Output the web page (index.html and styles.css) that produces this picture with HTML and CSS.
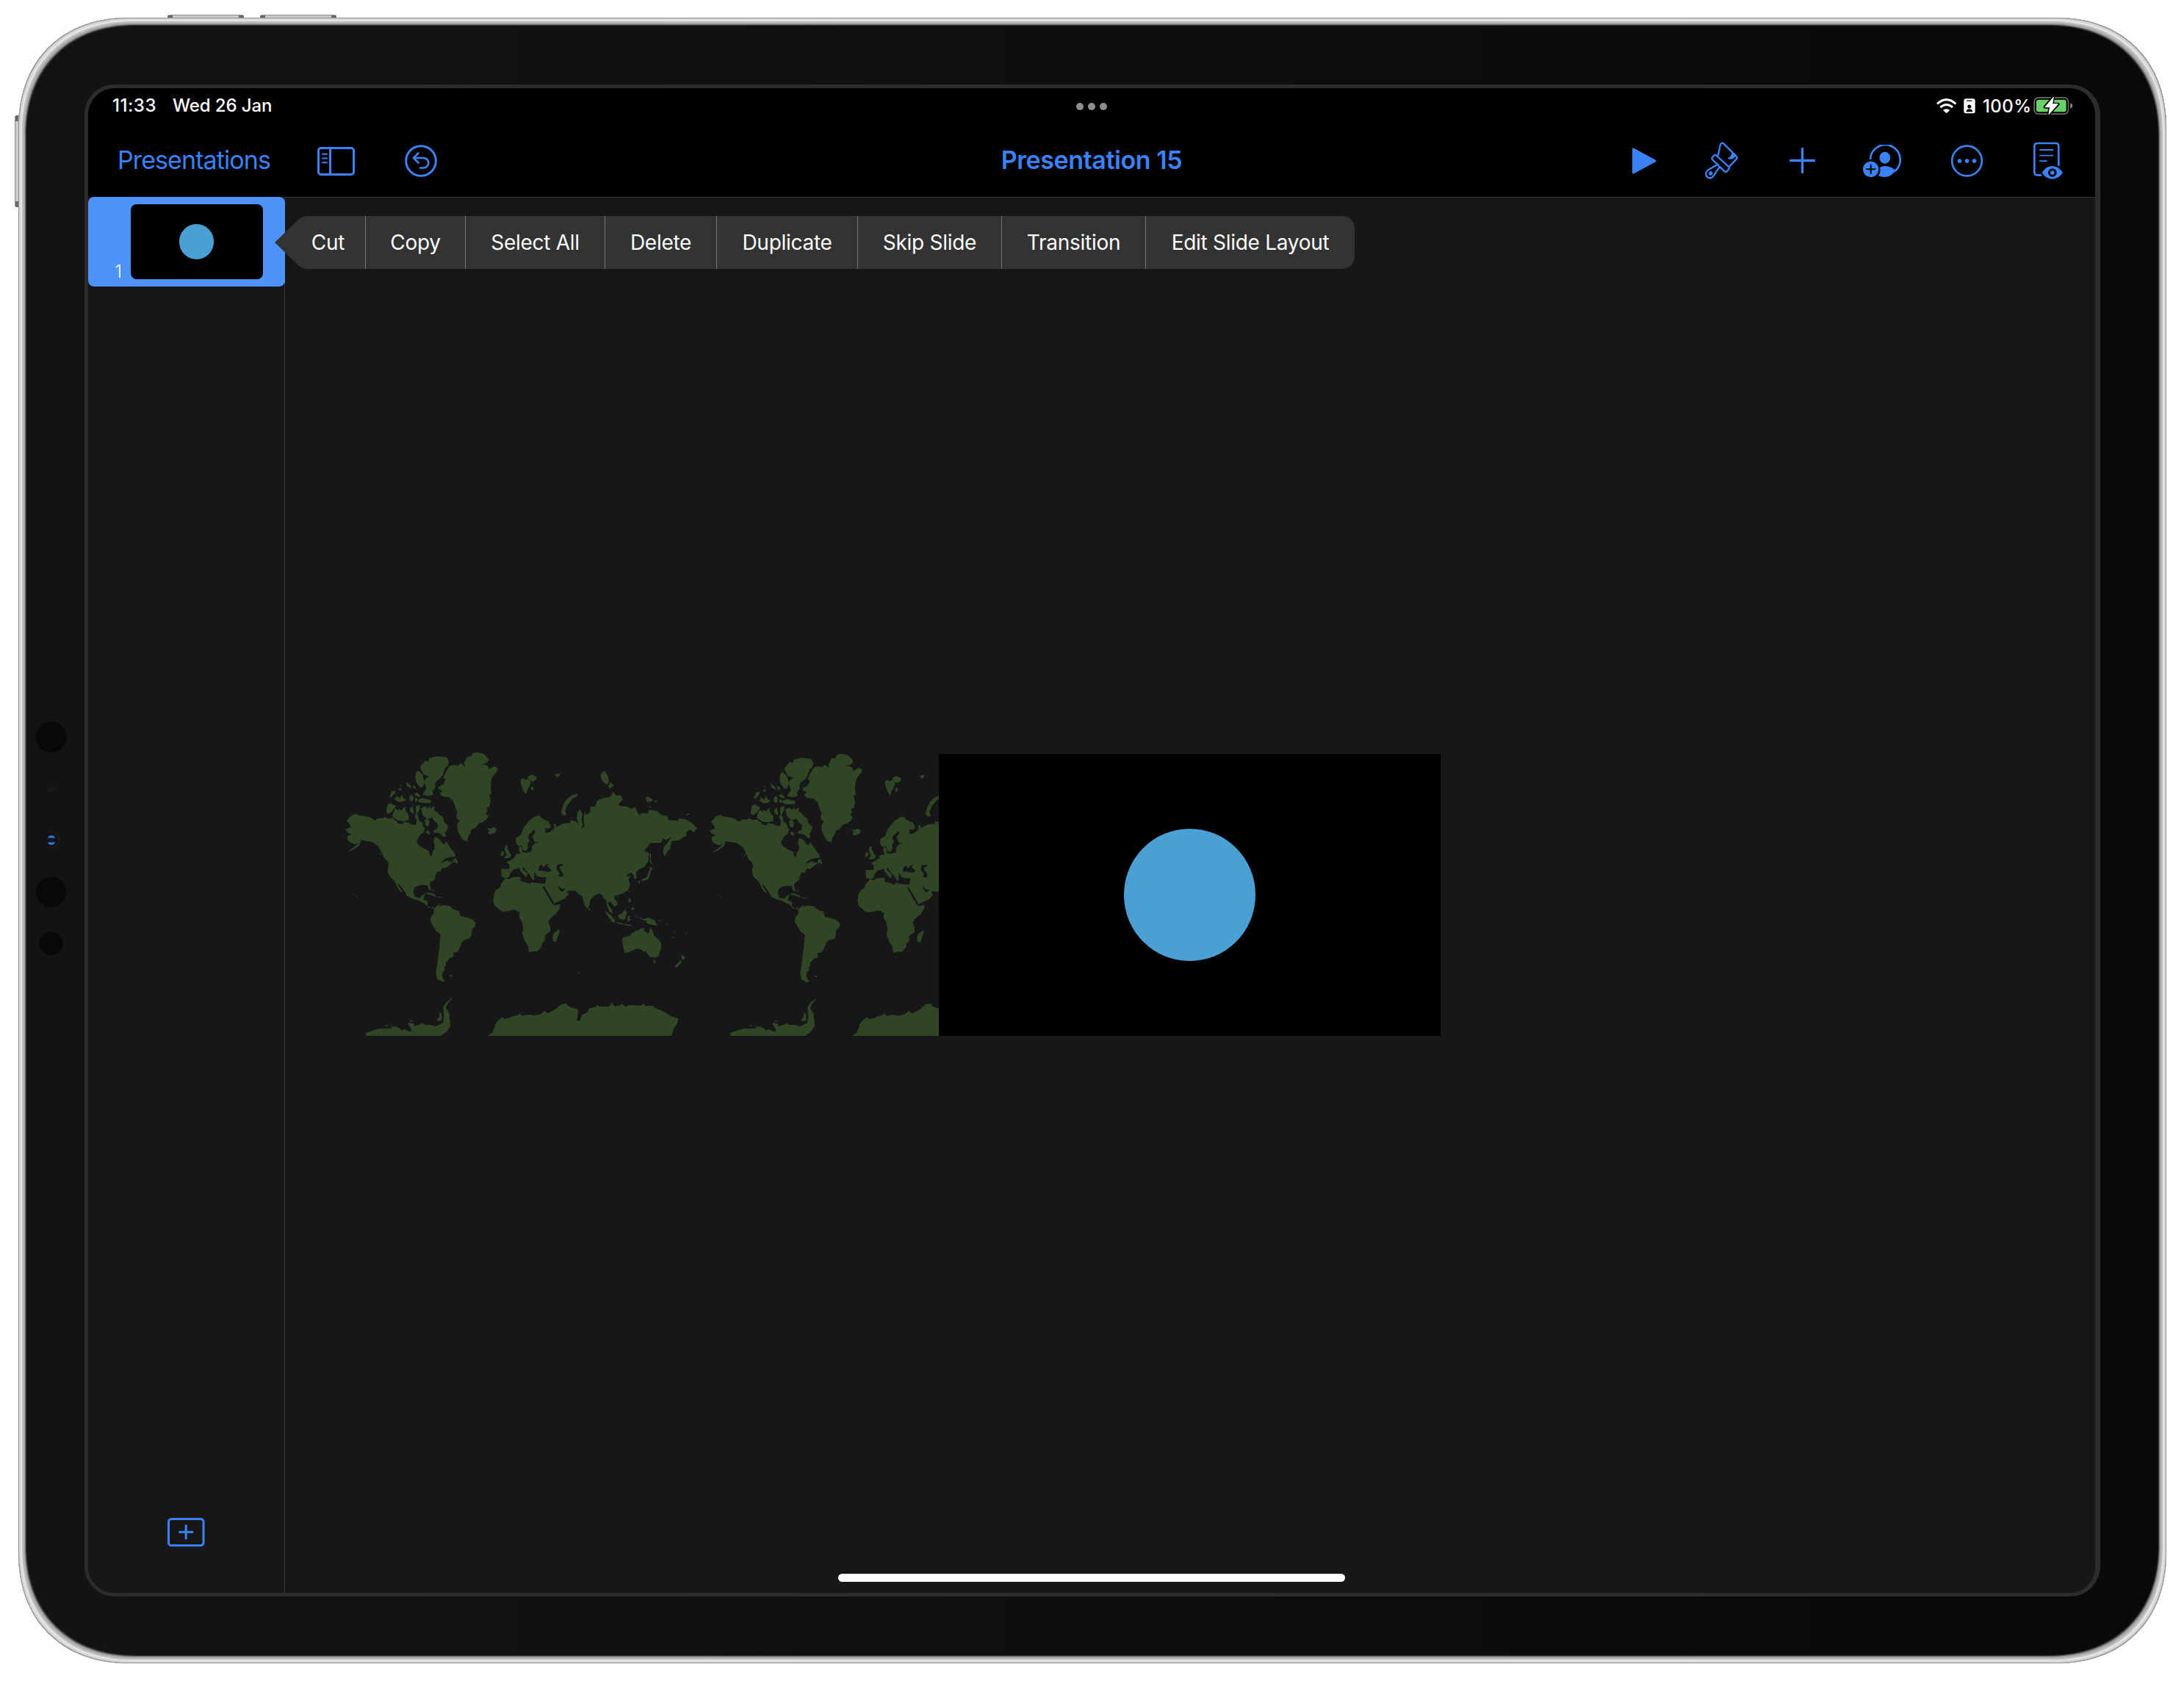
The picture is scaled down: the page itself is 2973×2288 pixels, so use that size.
FILE: index.html
```html
<!DOCTYPE html>
<html lang="en">
<head>
<meta charset="utf-8">
<title>Presentation 15</title>
<link rel="stylesheet" href="styles.css">
</head>
<body>
<div class="stage">
  <div class="device">
    <i class="key key-top key-up"></i>
    <i class="key key-top key-down"></i>
    <i class="key key-side"></i>
    <svg class="sensors" width="60" height="340" viewBox="40 970 60 340">
      <circle cx="69.5" cy="1003" r="21" fill="#080808"/>
      <circle cx="69.5" cy="1073" r="3.5" fill="none" stroke="#222" stroke-width="2" stroke-dasharray="1.5 1.5"/>
      <circle cx="69.5" cy="1073" r="1" fill="#222"/>
      <circle cx="70.5" cy="1143" r="11" fill="#1a1b1c"/>
      <circle cx="69" cy="1143" r="10" fill="#101112"/>
      <circle cx="69.8" cy="1143.3" r="6.5" fill="#0d1430"/>
      <path d="M65 1140.500Q66 1137 70 1137T75 1140.500Z M65 1146.500Q66 1150 70 1150T75 1146.500Z" fill="#3f72b8"/>
      <circle cx="69.500" cy="1214" r="20.500" fill="#080808"/>
      <circle cx="69.500" cy="1284" r="16" fill="#080808"/>
    </svg>

    <div class="screen">
      <header class="status">
        <div class="status-left"><span class="time">11:33</span><span class="date">Wed 26 Jan</span></div>
        <div class="dots"><i></i><i></i><i></i></div>
        <div class="status-right">
          <svg class="wifi" width="29" height="22" viewBox="976 26 87 66" fill="none" stroke="#fff">
            <path d="M982 51Q1020 17 1058 51" stroke-width="9"/>
            <path d="M995 65Q1020 44 1045 65" stroke-width="9"/>
            <path d="M1020 90L1006 77Q1020 66 1034 77Z" fill="#fff" stroke="none"/>
          </svg>
          <svg class="badge" width="16" height="21" viewBox="1091 29 48 63">
            <rect x="1092" y="30" width="46" height="60" rx="9" fill="#fff"/>
            <path d="M1105 38.500H1124" stroke="#000" stroke-width="4" stroke-linecap="round"/>
            <circle cx="1114.500" cy="62" r="7.500" fill="#000"/>
            <path d="M1101 84Q1103 72 1114.500 72T1128 84Z" fill="#000"/>
          </svg>
          <span class="percent">100%</span>
          <svg class="battery" width="54" height="26" viewBox="1376 21 162 78">
            <rect x="1379.500" y="26.500" width="139" height="67" rx="17" fill="none" stroke="#6b6b6b" stroke-width="5"/>
            <path d="M1527 49Q1536 53 1536 60T1527 72Z" fill="#8a8a8a"/>
            <rect x="1388" y="35" width="122" height="50" rx="9" fill="#67d067"/>
            <path d="M1458 24L1423 65H1444L1438 96L1477 53H1453Z" fill="#fff" stroke="#000" stroke-width="12" stroke-linejoin="round"/>
            <path d="M1458 25L1424 65H1444L1439 95L1476 53H1453Z" fill="#fff" stroke="#fff" stroke-width="3" stroke-linejoin="round"/>
          </svg>
        </div>
      </header>

      <nav class="toolbar">
        <div class="tools-left">
          <span class="back">Presentations</span>
          <svg class="panel-icon" width="52" height="40" viewBox="431 198 52 40">
            <rect x="433.500" y="200.500" width="48" height="36" rx="3.500" fill="none" stroke="currentColor" stroke-width="3"/>
            <path d="M449.500 200V237" stroke="currentColor" stroke-width="3"/>
            <path d="M439 208.700H445 M439 214.500H445 M439 220.300H445" stroke="currentColor" stroke-width="2" stroke-linecap="round"/>
          </svg>
          <svg width="44" height="44" viewBox="551.500 196.500 44 44" fill="none" stroke="currentColor" stroke-width="3" stroke-linecap="round" stroke-linejoin="round">
            <circle cx="573.500" cy="218.500" r="20.300"/>
            <path d="M570 208L563.500 214.500L570 221 M564 214.500H577A6.700 6.700 0 0 1 577 228H572.500" stroke-width="2.600"/>
          </svg>
        </div>
        <h1 class="title">Presentation 15</h1>
        <div class="tools-right">
          <svg class="play" width="36" height="40" viewBox="2220 199 36 40"><path d="M2223.500 203V235L2253 219Z" fill="currentColor" stroke="currentColor" stroke-width="3" stroke-linejoin="round"/></svg>
          <svg class="brush" width="47" height="53" viewBox="30 205 141 159" fill="none" stroke="currentColor" stroke-width="7" stroke-linejoin="round" stroke-linecap="round">
            <path d="M85 265C91 252 92 228 97 217Q102 209 109 216L161 267Q166 273 161 279L133 308"/>
            <path d="M78 263L131 311Q134 316 130 320L122 329Q118 333 113 329L64 282Q59 277 63 271L70 264Q74 260 78 263Z"/>
            <path d="M83 297L80 303L48 321C35 329 33 343 42 352C53 360 63 356 69 345L91 312L99 315"/>
            <circle cx="56" cy="337" r="8" fill="currentColor" stroke="none"/>
            <path d="M142 247C143 261 138 270 124 276Q136 282 148 276L160 266Z" fill="currentColor" stroke="none"/>
          </svg>
          <svg class="plus" width="37" height="37" viewBox="2435 200 37 37" stroke="currentColor" stroke-width="3.300" stroke-linecap="round"><path d="M2453.500 202.500V234.500M2437.500 218.500H2469.500"/></svg>
          <svg class="collab" width="53" height="44" viewBox="675 216 159 132">
            <path d="M708 276A61 61 0 1 1 807 325" fill="none" stroke="currentColor" stroke-width="8"/>
            <ellipse cx="767.500" cy="269" rx="22" ry="24" fill="currentColor"/>
            <path d="M747 309Q757 303 768 303Q796 304 811 322Q794 347 767 348Q753 348 741 343Q752 329 747 309Z" fill="currentColor"/>
            <circle cx="710" cy="316" r="32" fill="currentColor"/>
            <path d="M710 299V333M693 316H727" stroke="#000" stroke-width="6" stroke-linecap="round"/>
          </svg>
          <svg class="more" width="45" height="44" viewBox="1035 217 135 132" fill="currentColor">
            <circle cx="1102.500" cy="283" r="61" fill="none" stroke="currentColor" stroke-width="8"/>
            <circle cx="1072.500" cy="283" r="8.500"/><circle cx="1102.500" cy="283" r="8.500"/><circle cx="1132.500" cy="283" r="8.500"/>
          </svg>
          <svg class="doc" width="42" height="51" viewBox="1371 208 126 153" fill="none" stroke="currentColor" stroke-width="8" stroke-linecap="butt">
            <path d="M1477 306V226Q1477 214 1465 214H1390Q1378 214 1378 226V331Q1378 344 1390 344H1407"/>
            <path d="M1401 241H1453M1401 264H1453M1401 286.500H1428" stroke-width="5.500" stroke-linecap="round"/>
            <path d="M1409 334Q1426 307 1451 307T1494 334Q1477 360 1451 360T1409 334Z" fill="currentColor" stroke="none"/>
            <circle cx="1451.500" cy="334" r="13" stroke="#000" stroke-width="9"/>
          </svg>
        </div>
      </nav>

      <main class="workspace">
        <aside class="sidebar">
          <div class="slide-item">
            <span class="slide-number">1</span>
            <div class="thumb"><i class="ball"></i></div>
          </div>
          <svg class="add-slide" width="52" height="40" viewBox="227 2064 52 40" fill="none" stroke="currentColor" stroke-width="3" stroke-linecap="round">
            <rect x="229.500" y="2066.500" width="47.500" height="36" rx="4"/>
            <path d="M253.200 2075.500V2093M244.500 2084.300H262"/>
          </svg>
        </aside>

        <section class="canvas">
          <svg class="map" width="818" height="400" viewBox="0 0 2454 1200">
            <defs>
              <g id="world">
                <g fill="#2f4524">
                <path d="M35 322L55 300L73 292L85 299L105 302L130 307L152 321L162 312L185 311L190 306L205 313L225 310L230 318L240 322L244 332L265 335L268 325L290 330L300 336L318 338L322 318L314 305L318 288L328 300L332 320L345 330L348 345L356 350L350 368L335 380L325 398L322 408L328 420L350 434L370 443L375 460L381 468L386 452L386 445L393 440L396 425L390 405L396 388L405 390L418 400L425 412L436 418L441 403L455 425L465 440L477 455L480 468L450 472L432 480L420 495L445 484L455 485L452 492L462 487L470 492L472 478L482 474L490 492L486 497L478 490L460 498L452 506L438 515L430 512L422 520L420 528L405 530L398 545L395 560L378 573L374 580L380 600L376 607L370 600L366 585L345 583L325 588L313 595L308 612L315 632L335 636L345 624L356 620L350 638L350 645L365 648L366 668L378 677L390 672L390 682L382 676L372 678L355 660L340 654L325 645L305 640L280 628L278 618L265 600L245 575L248 588L265 614L255 610L243 593L232 570L215 552L205 538L203 512L207 510L205 490L190 475L178 450L165 425L140 408L105 402L95 400L88 422L65 438L38 449L65 430L85 412L70 418L55 412L45 405L38 395L40 382L55 378L38 368L30 357L52 348L48 335Z"/>
                <path d="M392 680L405 668L418 662L416 673L425 665L455 668L468 680L480 686L495 690L500 710L530 718L548 724L563 738L560 752L547 765L545 790L538 802L520 806L508 815L500 835L488 857L470 860L473 870L468 880L455 882L450 892L440 900L442 910L434 918L438 930L428 938L425 955L430 968L440 976L425 979L405 968L400 940L405 910L410 870L415 830L419 785L400 770L388 750L377 730L382 710L392 700Z"/>
                <path d="M408 185L432 170L440 152L430 145L440 125L455 98L475 92L490 97L500 86L520 100L515 85L528 60L545 58L550 45L570 42L595 47L618 72L608 85L580 94L600 92L613 98L615 112L640 98L653 108L648 122L630 143L625 165L624 195L628 208L618 215L624 240L618 265L608 268L612 285L602 290L615 302L605 318L590 328L575 332L562 350L545 358L540 375L532 385L528 405L510 400L498 380L488 358L487 335L497 320L485 312L483 295L488 288L480 268L470 240L455 226L425 222L415 208L428 201L410 190Z"/>
                <path d="M370 80L373 66L385 62L410 58L445 63L453 80L448 98L438 106L428 135L418 148L400 162L396 175L400 182L386 200L390 215L370 220L345 215L350 207L362 190L353 165L358 150L372 140L350 133L336 105L338 96L358 76Z"/>
                <path d="M318 125L328 116L345 132L352 155L355 165L345 185L335 185L320 165L316 145Z"/>
                <path d="M340 270L355 262L368 272L375 260L378 272L395 262L393 278L405 285L412 295L430 308L432 325L450 343L445 360L438 370L443 385L432 388L415 372L392 370L390 360L405 355L408 335L395 325L385 308L365 315L345 297Z"/>
                <path d="M225 290L235 270L245 280L250 272L258 280L275 262L276 280L290 300L290 318L270 323L245 320L222 305Z"/>
                <path d="M197 285L203 255L215 250L237 262L222 283L205 295Z"/>
                <path d="M211 222L220 200L235 198L232 210L215 228Z M232 235L240 218L252 230L262 213L266 228L278 234L270 243L250 245Z M279 163L298 178L300 190L282 180Z M291 225L300 213L309 225L305 242L293 240Z M311 215L322 205L338 220L330 225Z M326 235L345 228L380 236L378 248L345 249L330 245Z M294 270L305 262L310 285L308 294L296 285Z M318 262L335 256L335 272L322 295L318 280Z M306 175L317 180L318 192L308 188Z M248 178L256 172L258 179Z M247 190L258 187L260 196L252 199Z M313 232L322 228L326 238L318 245Z M354 318L365 312L375 325L370 345L358 342Z M358 365L368 360L378 378L365 375Z"/>
                <path d="M608 350L620 354L638 347L648 358L642 370L622 377L612 371L618 363Z"/>
                <path d="M684 422L692 420L692 435L698 445L708 462L704 472L685 475L678 472L690 460L684 450L680 435Z M664 462L668 448L678 445L677 460L670 467Z"/>
                <path d="M746 155L755 148L768 155L775 147L788 162L782 180L773 195L768 213L758 200L752 185L747 170Z M775 142L790 133L810 140L812 150L798 162L782 155Z M788 185L795 180L800 192L790 199Z M886 130L896 131L908 127L905 137L896 145Z"/>
                <path d="M912 288L918 262L932 236L952 219L978 210L980 219L958 232L938 256L928 280L933 298L920 300Z M1072 138L1080 122L1090 118L1103 140L1107 165L1098 174L1080 160Z M1112 163L1128 178L1108 190L1104 180Z M1256 228L1265 222L1285 233L1282 243L1262 245Z M1290 237L1308 242L1297 246Z M1268 262L1280 265L1275 269Z M1422 296L1432 290L1436 297L1425 299Z"/>
                <path d="M668 518L700 518L700 500L688 490L704 484L722 470L725 458L745 455L738 438L742 425L750 428L754 450L770 452L790 447L792 428L805 412L820 408L803 407L793 385L806 368L800 357L792 368L779 378L777 392L783 403L775 415L777 432L766 445L756 440L750 422L736 425L727 410L726 393L747 378L757 352L780 322L805 303L825 300L830 310L860 325L870 345L862 353L845 352L848 372L868 366L885 350L880 335L890 334L892 347L920 332L950 330L950 318L972 325L983 335L975 310L980 285L990 275L998 295L995 320L1000 338L993 354L1006 345L1003 310L1008 280L1012 297L1030 288L1030 265L1052 262L1058 240L1085 228L1110 225L1125 203L1135 218L1155 218L1164 235L1145 255L1155 262L1182 263L1195 272L1215 266L1222 285L1232 300L1240 290L1265 292L1272 276L1305 283L1320 298L1345 302L1350 318L1388 322L1392 312L1420 315L1445 330L1467 352L1455 368L1435 358L1422 370L1424 385L1410 388L1400 397L1388 402L1362 405L1357 435L1345 448L1334 468L1328 450L1330 430L1345 412L1362 387L1340 400L1328 394L1320 412L1278 412L1250 445L1270 452L1268 485L1252 510L1235 516L1218 530L1220 558L1210 558L1208 545L1198 533L1178 543L1185 550L1197 546L1187 560L1193 585L1185 605L1165 617L1145 624L1130 628L1128 640L1142 655L1140 665L1130 672L1112 652L1102 655L1108 670L1120 685L1121 702L1107 690L1098 665L1096 645L1085 640L1083 630L1072 618L1050 625L1030 645L1027 665L1018 680L1010 670L1003 650L997 628L988 625L970 607L935 608L925 600L910 597L898 584L903 600L915 612L930 600L942 622L925 640L880 660L860 625L836 590L845 578L850 552L830 553L812 548L810 538L820 530L815 542L800 532L806 545L800 545L803 558L796 565L782 540L770 528L755 507L755 520L778 540L772 540L772 552L765 550L748 530L740 513L715 522L705 535L698 552L685 556L668 550Z"/>
                <path d="M680 562L685 556L700 560L715 552L745 550L746 568L765 572L785 580L788 572L820 577L845 578L838 590L858 630L880 666L908 663L905 680L890 702L870 717L859 733L867 755L867 773L845 790L845 812L834 820L832 835L815 855L795 855L780 859L777 835L762 810L752 780L757 765L752 735L740 715L742 692L735 695L730 687L715 685L695 691L670 692L640 668L634 650L637 622L645 605L665 590L665 580Z"/>
                <path d="M903 761L905 775L898 795L890 817L878 812L877 795L882 780L895 772Z M1022 673L1031 683L1024 688Z"/>
                <path d="M1160 808L1165 798L1190 793L1200 782L1215 770L1230 768L1240 758L1252 762L1250 770L1268 783L1276 755L1285 770L1290 788L1308 805L1320 820L1320 845L1308 875L1295 880L1275 878L1265 865L1255 852L1250 858L1240 848L1225 844L1205 850L1190 858L1172 862L1165 835Z M1288 890L1298 892L1296 903L1290 902Z M1403 863L1410 875L1420 877L1412 890L1404 885Z M1400 890L1405 895L1385 922L1374 918Z"/>
                <path d="M1087 687L1100 695L1118 710L1132 728L1130 738L1120 735L1105 715Z M1130 735L1160 739L1168 745L1150 744Z M1142 708L1158 700L1173 685L1180 697L1172 725L1150 722Z M1183 712L1200 708L1188 716L1200 730L1190 727L1188 738L1182 728Z M1232 712L1245 722L1268 717L1295 728L1300 742L1308 750L1285 747L1262 740L1258 730L1240 725Z M1185 640L1195 638L1196 652L1188 655Z M1195 680L1208 672L1210 684L1202 685Z M1170 742L1200 748L1198 752L1172 747Z M1215 702L1220 715L1216 718Z M1188 605L1192 607L1190 617Z M1140 628L1148 628L1145 635Z M1225 570L1235 565L1232 578Z M1238 560L1262 552L1268 530L1275 520L1270 508L1288 515L1278 525L1275 540L1268 560L1245 568Z M1272 455L1280 455L1278 480L1284 498L1276 495Z M1310 725L1320 730L1312 732Z M1340 742L1352 748L1345 748Z M1373 770L1379 772L1375 777Z M1366 794L1376 800L1370 801Z M1418 784L1426 775L1422 785Z"/>
                <path d="M355 618L370 614L395 622L402 633L385 626Z M400 630L428 634L415 637Z M458 953L470 951L468 958L458 958Z M981 936L986 938L984 944Z M60 619L66 622L62 623Z M72 626L80 631L76 632Z M15 376L22 378L20 382Z M170 450L178 458L174 462Z M384 598L392 606L388 609Z"/>
                <path d="M115 1200L114 1188L145 1177L165 1170L215 1170L225 1162L245 1163L262 1178L270 1172L298 1184L300 1172L288 1155L288 1146L310 1150L310 1160L330 1155L345 1147L355 1155L380 1155L398 1162L430 1145L433 1120L430 1080L445 1060L473 1043L450 1065L440 1085L455 1110L459 1160L445 1182L420 1200Z M403 1135L415 1120L415 1103L424 1110L425 1135L412 1140Z M292 1135L315 1139L298 1142Z M192 1156L205 1156L200 1163Z M212 1159L224 1160L218 1163Z"/>
                <path d="M610 1200L630 1187L642 1160L640 1155L662 1130L673 1124L680 1130L705 1126L712 1120L735 1115L742 1108L752 1117L780 1113L800 1117L825 1112L843 1098L858 1108L890 1090L912 1070L932 1067L940 1078L960 1086L978 1090L982 1105L975 1138L988 1137L998 1113L1018 1105L1025 1088L1055 1080L1058 1072L1064 1080L1108 1080L1118 1064L1130 1079L1150 1076L1160 1069L1172 1080L1190 1074L1238 1076L1248 1067L1255 1077L1285 1077L1298 1088L1320 1095L1338 1105L1360 1120L1390 1128L1388 1145L1370 1172L1362 1200Z"/>
                </g>
                <g fill="#171719">
                  <path d="M818 525L822 508L832 500L840 512L850 500L860 497L855 508L868 518L870 527L855 530L838 526Z M893 505L905 498L918 498L917 505L905 510L908 520L918 535L920 549L905 550L900 545L906 537L893 518Z"/>
                </g>
                <path d="M839 590L858 622L879 658" fill="none" stroke="#171719" stroke-width="7"/>
              </g>
            </defs>
            <g><use href="#world"/></g>
            <g><use href="#world" transform="translate(1488 6.500) scale(1 .9945)"/></g>
          </svg>
          <div class="slide"><i class="ball"></i></div>

          <div class="menu">
            <span>Cut</span><span>Copy</span><span>Select All</span><span>Delete</span><span>Duplicate</span><span>Skip Slide</span><span>Transition</span><span>Edit Slide Layout</span>
          </div>
          <i class="home-bar"></i>
        </section>
      </main>
    </div>
  </div>
</div>
</body>
</html>
```
FILE: styles.css
```css
* { box-sizing: border-box; }

body {
  margin: 0;
  background: #fff;
  font-family: Inter, "Liberation Sans", sans-serif;
}

svg { display: block; flex: none; }

.stage {
  width: 2973px;
  height: 2288px;
  padding: 24px 24px 24px 25px;
  overflow: hidden;
}

/* Tablet body */
.device {
  position: relative;
  width: 2924px;
  height: 2240px;
  padding: 91px 90px;
  border-radius: 152px;
  corner-shape: superellipse(1.15);
  background: linear-gradient(90deg, #131313, #090909);
  box-shadow:
    inset 0 0 0 1px #929695,
    inset 0 0 0 3px #d3d6d5,
    inset 0 0 0 5px #e3e6e5,
    inset 0 0 0 7px #bdc0bf,
    inset 0 0 0 9px #a3a6a5,
    inset 0 0 0 10px #686a69,
    inset 0 0 0 11px #363737;
}

.key {
  position: absolute;
  background: #c9cccb;
}
.key-top {
  top: -4px;
  width: 104px;
  height: 4px;
  border-top: 1px solid #8a8d8c;
  border-left: 7px solid #666968;
  border-right: 7px solid #666968;
  border-radius: 3px 3px 0 0;
}
.key-up { left: 203px; }
.key-down { left: 329px; }
.key-side {
  left: -5px;
  top: 133px;
  width: 5px;
  height: 125px;
  border-left: 1px solid #8a8d8c;
  border-top: 8px solid #666968;
  border-bottom: 8px solid #666968;
  border-radius: 3px 0 0 3px;
}
.sensors {
  position: absolute;
  left: 15px;
  top: 946px;
}

.screen {
  display: flex;
  flex-direction: column;
  width: 2744px;
  height: 2058px;
  border: 5px solid #2c2c2c;
  border-right-width: 7px;
  border-radius: 41px;
  background: #000;
  overflow: hidden;
}

/* Status bar */
.status {
  display: grid;
  grid-template-columns: 1fr auto 1fr;
  align-items: center;
  height: 50px;
  color: #fff;
  font-size: 24px;
  font-weight: 500;
}
.status-left {
  display: flex;
  gap: 22px;
  padding: 0 0 3px 33px;
  white-space: nowrap;
}
.time { width: 60px; letter-spacing: .55px; }
.date { letter-spacing: -.1px; }
.dots { display: flex; gap: 6px; }
.dots i {
  width: 10px;
  height: 10px;
  border-radius: 50%;
  background: #8e8e8e;
}
.status-right {
  display: flex;
  justify-content: flex-end;
  align-items: center;
  padding: 0 30px 2px 0;
}
.badge { margin-left: 9px; }
.percent {
  width: 65px;
  margin: 0 4px 0 10px;
  letter-spacing: .4px;
  font-weight: 450;
}

/* Toolbar */
.toolbar {
  display: grid;
  grid-template-columns: 1fr auto 1fr;
  align-items: center;
  height: 98px;
  padding-bottom: 1px;
  color: #3b82f7;
  font-size: 34px;
}
.tools-left {
  display: flex;
  align-items: center;
  padding-left: 40px;
}
.back {
  width: 207px;
  margin: 0 64px 2px 0;
  letter-spacing: -.9px;
  white-space: nowrap;
}
.panel-icon { margin-right: 68px; }
.title {
  margin: 0 0 2px;
  font-size: 34px;
  font-weight: 600;
  letter-spacing: -.42px;
}
.tools-right {
  display: flex;
  justify-content: flex-end;
  align-items: center;
  padding-right: 43px;
}
.play { margin-right: 64px; }
.brush { margin-right: 68px; }
.plus { margin-right: 63px; }
.collab { margin-right: 67px; }
.more { margin-right: 67px; }

/* Workspace */
.workspace {
  display: flex;
  flex: 1;
  background: #171719;
}
.sidebar {
  display: flex;
  flex-direction: column;
  align-items: center;
  justify-content: space-between;
  width: 268px;
  padding-bottom: 63px;
  border-right: 1px solid #3a3a3c;
  color: #3b82f7;
}
.add-slide { margin-right: 1px; }
.slide-item {
  display: flex;
  align-items: flex-end;
  width: 268px;
  height: 122px;
  padding: 10px 10px 10px 37px;
  border-radius: 8px;
  background: #4f92f8;
  position: relative;
}
.slide-number {
  width: 21px;
  margin-bottom: -3px;
  color: #fff;
  font-size: 24px;
  font-weight: 300;
  line-height: 26px;
}
.thumb,
.slide {
  display: flex;
  align-items: center;
  justify-content: center;
  background: #000;
}
.thumb {
  width: 180px;
  height: 102px;
  border-radius: 8px;
}
.ball {
  width: 26.3%;
  aspect-ratio: 1;
  border-radius: 50%;
  background: #4a9fd4;
}

.canvas {
  position: relative;
  flex: 1;
  border-top: 1px solid #38383a;
}
.map {
  position: absolute;
  left: 72px;
  top: 741px;
}
.slide {
  position: absolute;
  left: 890px;
  top: 757px;
  width: 683px;
  height: 384px;
}

/* Edit menu, with its pointer aimed at the selected slide */
.menu {
  position: absolute;
  left: -14px;
  top: 25px;
  display: grid;
  grid-template-columns: 123px 136px 190px 152px 192px 196px 196px 285px;
  width: 1470px;
  height: 72px;
  background: #333334;
  clip-path: path("M0 36L32 5Q37 0 46 0H1451Q1470 0 1470 19V53Q1470 72 1451 72H46Q37 72 32 67Z");
  color: #fff;
  font-size: 28px;
  letter-spacing: -.28px;
  line-height: 72px;
  text-align: center;
  white-space: nowrap;
}
.menu span + span { border-left: 1px solid #767677; }
.menu span:first-child { padding-left: 22px; }

.home-bar {
  position: absolute;
  left: 753px;
  bottom: 15px;
  width: 690px;
  height: 11px;
  border-radius: 6px;
  background: #fff;
}
```
